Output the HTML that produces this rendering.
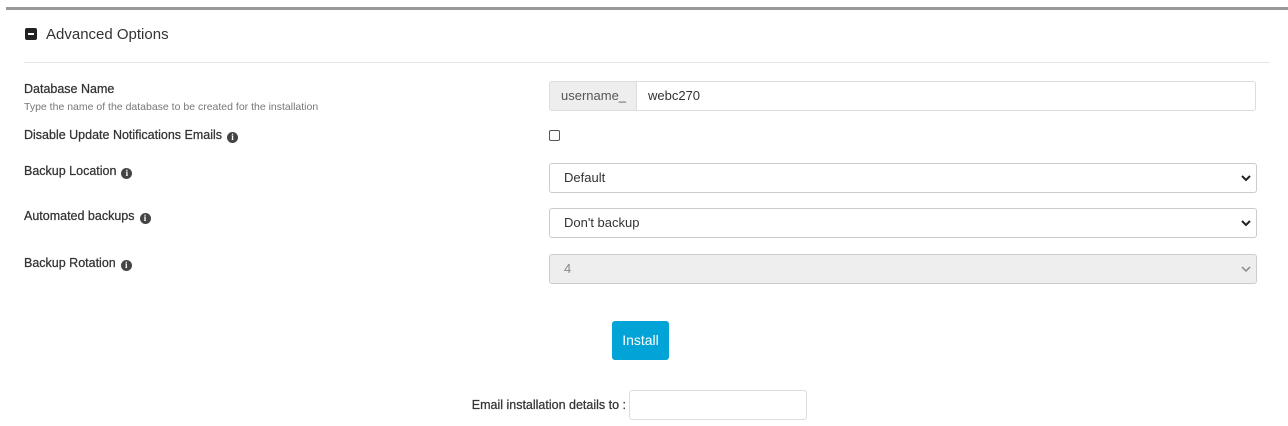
<!DOCTYPE html>
<html><head><style>
body{margin:0;width:1288px;height:426px;background:#fff;font-family:"Liberation Sans",sans-serif;color:#444;position:relative;overflow:hidden}
.a{position:absolute}
.lbl{font-size:12.5px;color:#333;font-weight:normal;-webkit-text-stroke:0.25px #333}
.i{display:inline-block;width:11px;height:11px;border-radius:50%;background:#444;color:#fff;font-size:9px;font-weight:bold;text-align:center;line-height:11px;vertical-align:-1px;margin-left:5px;font-family:"Liberation Serif",serif;-webkit-text-stroke:0}
.sel{border:1px solid #ccc;border-radius:3px;background:#fff;font-size:13px;color:#333;box-sizing:border-box;padding-left:14px;line-height:28px}
.sel svg{position:absolute;right:5px;top:10px}
</style></head><body>
<div class="a" style="left:6px;top:7px;width:1282px;height:3px;background:#999"></div>
<div class="a" style="left:25px;top:28px;width:12px;height:12px;background:#222;border-radius:2px"><div style="position:absolute;left:3px;top:5px;width:6px;height:2px;background:#fff"></div></div>
<div class="a" style="left:46px;top:26px;font-size:15px;color:#333">Advanced Options</div>
<div class="a" style="left:24px;top:62px;width:1246px;height:1px;background:#e5e5e5"></div>

<div class="a lbl" style="left:24px;top:82px">Database Name</div>
<div class="a" style="left:24px;top:101px;font-size:10.5px;color:#777">Type the name of the database to be created for the installation</div>
<div class="a" style="left:549px;top:81px;width:707px;height:30px;border:1px solid #ddd;border-radius:3px;box-sizing:border-box"></div>
<div class="a" style="left:549px;top:81px;width:88px;height:30px;background:#eee;border:1px solid #ddd;border-radius:3px 0 0 3px;box-sizing:border-box;font-size:13px;color:#555;line-height:28px;padding-left:11px">username_</div>
<div class="a" style="left:648px;top:88px;font-size:13px;color:#333">webc270</div>

<div class="a lbl" style="left:24px;top:128px">Disable Update Notifications Emails<span class="i">i</span></div>
<div class="a" style="left:549px;top:130px;width:11px;height:11px;border:1px solid #555;border-radius:2px;box-sizing:border-box"></div>

<div class="a lbl" style="left:24px;top:164px">Backup Location<span class="i">i</span></div>
<div class="a sel" style="left:549px;top:163px;width:708px;height:30px">Default<svg width="10" height="8" viewBox="0 0 10 8"><path d="M1 2l4 4 4-4" stroke="#222" stroke-width="2" fill="none"/></svg></div>

<div class="a lbl" style="left:24px;top:209px">Automated backups<span class="i">i</span></div>
<div class="a sel" style="left:549px;top:208px;width:708px;height:30px">Don't backup<svg width="10" height="8" viewBox="0 0 10 8"><path d="M1 2l4 4 4-4" stroke="#222" stroke-width="2" fill="none"/></svg></div>

<div class="a lbl" style="left:24px;top:256px">Backup Rotation<span class="i">i</span></div>
<div class="a sel" style="left:549px;top:254px;width:708px;height:30px;background:#eee;color:#888">4<svg width="10" height="8" viewBox="0 0 10 8"><path d="M1 2l4 4 4-4" stroke="#888" stroke-width="1.5" fill="none"/></svg></div>

<div class="a" style="left:612px;top:321px;width:57px;height:39px;background:#02a3d6;border-radius:3px;color:#fff;font-size:14px;text-align:center;line-height:39px">Install</div>

<div class="a lbl" style="left:400px;top:398px;width:226px;text-align:right">Email installation details to :</div>
<div class="a" style="left:629px;top:390px;width:178px;height:30px;border:1px solid #ddd;border-radius:3px;box-sizing:border-box"></div>
</body></html>
